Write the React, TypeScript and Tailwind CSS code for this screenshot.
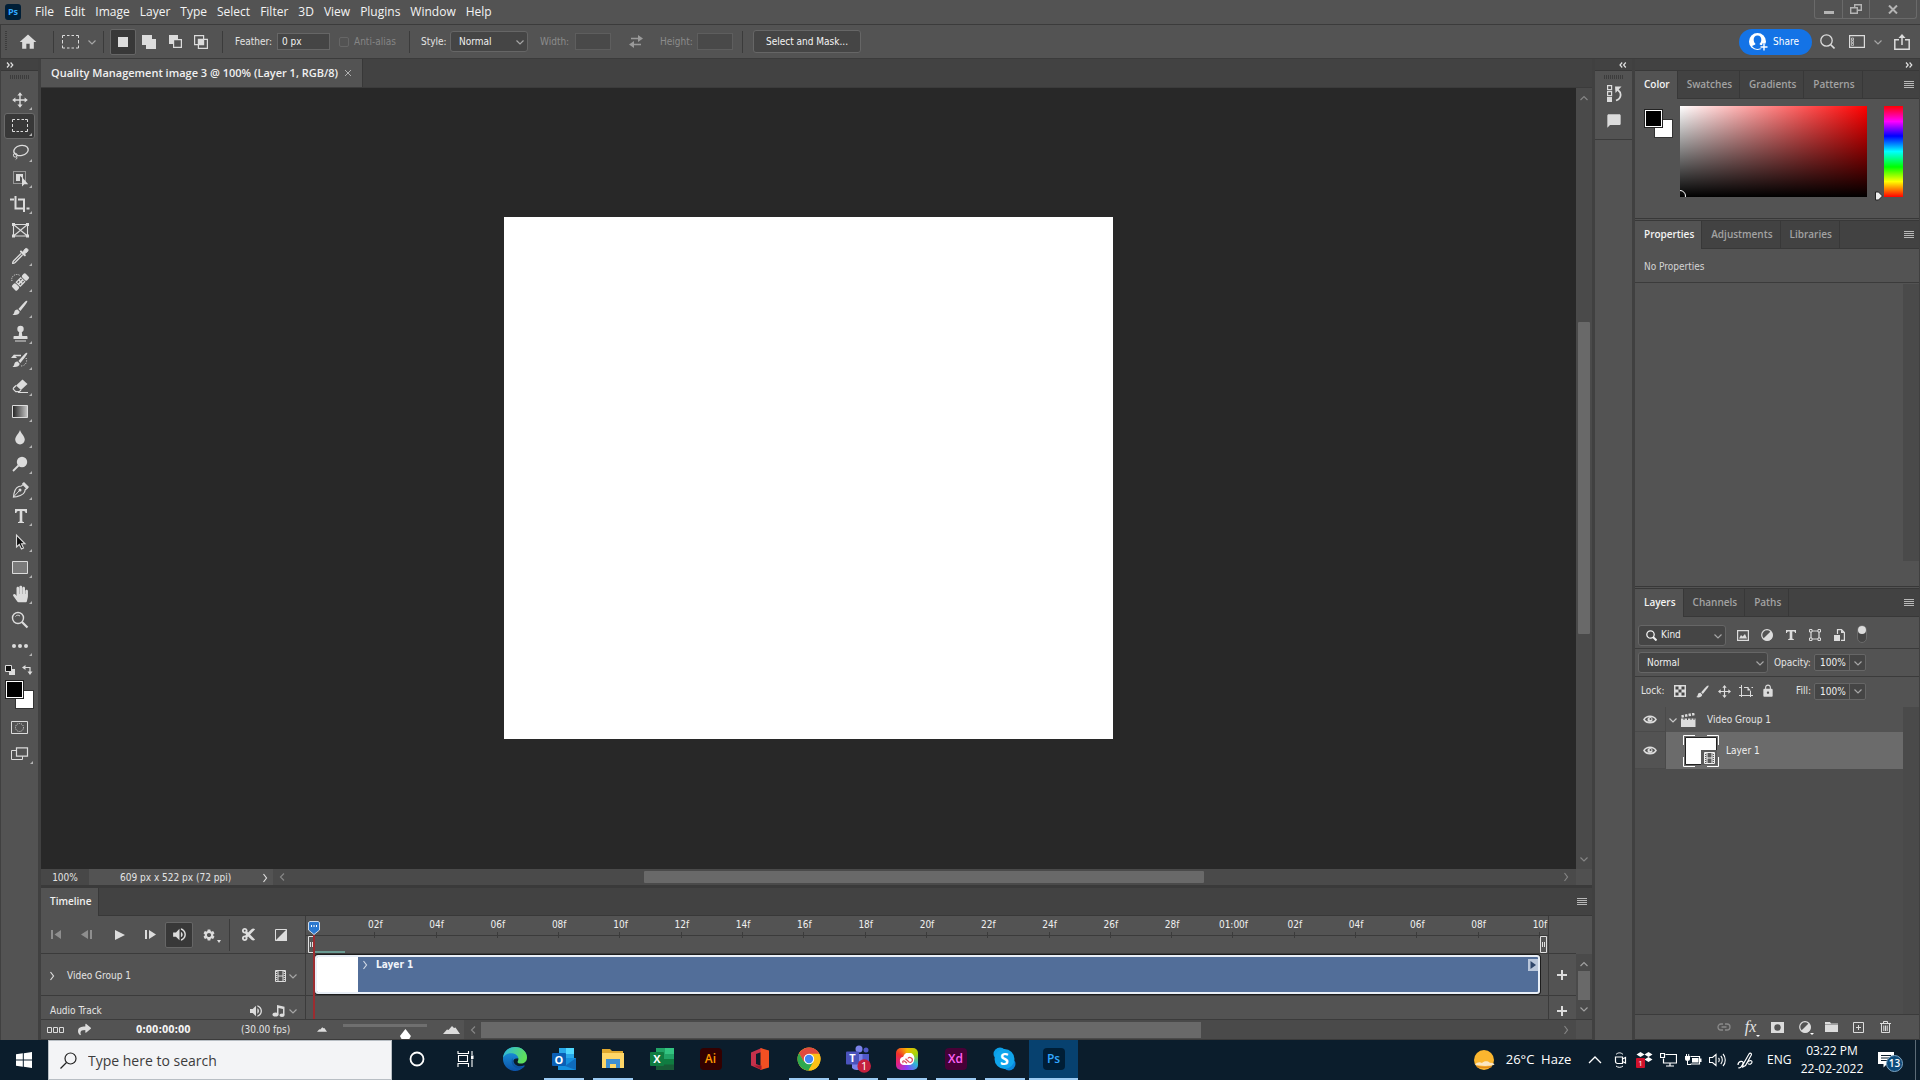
import type { ReactNode } from 'react'
import { FaHandPaper, FaShare, FaCut } from 'react-icons/fa'
import { MdHome, MdLock, MdModeComment, MdSettings, MdVolumeUp } from 'react-icons/md'

interface IconProps {
  w?: number
  h?: number
  children: ReactNode
  className?: string
}

function Icon({ w = 20, h = 20, children, className = '' }: IconProps) {
  return (
    <svg
      width={w}
      height={h}
      viewBox={`0 0 ${w} ${h}`}
      fill="none"
      stroke="none"
      aria-hidden="true"
      className={`shrink-0 ${className}`}
    >
      {children}
    </svg>
  )
}

type Direction = 'up' | 'down' | 'left' | 'right'

const chevronPaths: Record<Direction, string> = {
  up: 'M1.5 7 5 3.5 8.5 7',
  down: 'M1.5 3.5 5 7 8.5 3.5',
  left: 'M7 1.5 3.5 5 7 8.5',
  right: 'M3.5 1 6.5 5 3.5 9'
}

function Chevron({ dir, className = 'text-[#a6a6a6]' }: { dir: Direction; className?: string }) {
  return (
    <Icon w={10} h={10} className={className}>
      <path d={chevronPaths[dir]} stroke="currentColor" strokeWidth="1.2" />
    </Icon>
  )
}

function DoubleChevron({ dir }: { dir: 'left' | 'right' }) {
  return (
    <Icon w={8} h={6}>
      <path
        d={dir === 'right' ? 'M1 .5 3.2 3 1 5.5M4.6 .5 6.8 3 4.6 5.5' : 'M3.2 .5 1 3 3.2 5.5M6.8 .5 4.6 3 6.8 5.5'}
        stroke="#e0e0e0"
        strokeWidth="1.2"
      />
    </Icon>
  )
}

function PanelMenuIcon() {
  return (
    <Icon w={10} h={8}>
      <path d="M0 .5h10M0 2.5h10M0 4.5h10M0 6.5h10" stroke="#b8b8b8" strokeWidth="1" />
    </Icon>
  )
}

function Grip() {
  return (
    <Icon w={20} h={4}>
      <path d="M0 2h20" stroke="#3c3c3c" strokeWidth="4" strokeDasharray="1 1" />
    </Icon>
  )
}

function Separator() {
  return <span className="h-[22px] w-px shrink-0 bg-[#3b3b3b]" />
}

/* ---------- shared glyphs ---------- */

const light = '#dcdcdc'

const MoveGlyph = () => (
  <>
    <path d="M10 4v12M4 10h12" stroke={light} strokeWidth="1.4" />
    <path d="M10 2.2 12.6 5.4H7.4zM10 17.8 12.6 14.6H7.4zM2.2 10 5.4 7.4v5.2zM17.8 10 14.6 7.4v5.2z" fill={light} />
  </>
)

const BrushGlyph = () => (
  <>
    <path d="M17.2 2.8c-1-.6-2.6 1.2-4.6 3.4L8.4 11l2 2 4-5c1.8-2.4 3.5-4.5 2.8-5.2z" fill={light} />
    <path d="M7.6 11.6c-1.8-.2-3 .9-3.3 2.6-.2 1.1-.8 1.9-1.8 2.5 2.9 1 6.8.1 7.2-2.9z" fill={light} />
  </>
)

const FilmGlyph = ({ color = light }: { color?: string }) => (
  <>
    <path d="M.5.5h10v11H.5zM3 .5v11M8 .5v11M3 6h5" stroke={color} strokeWidth="1" />
    <path d="M1.7 1v10.5M9.3 1v10.5" stroke={color} strokeWidth="1.3" strokeDasharray="1 1" />
  </>
)

/* ---------- toolbar ---------- */

interface Tool {
  name: string
  glyph: ReactNode
  flyout?: boolean
}

const tools: Tool[] = [
  { name: 'Move', glyph: <MoveGlyph /> },
  {
    name: 'Rectangular Marquee',
    glyph: <path d="M2.5 6V3.5H5M7 3.5h2.5M11.500 3.500h2.500M15 3.500h2.500V6M17.500 8v3M17.500 13v2.500H15M13 15.500h-2.500M9 15.500H6.500M5 15.500H2.500V13M2.500 11V8" stroke={light} />
  },
  {
    name: 'Lasso',
    glyph: (
      <>
        <ellipse cx="11" cy="8.500" rx="7.300" ry="5" transform="rotate(-12 11 8.500)" stroke={light} strokeWidth="1.400" />
        <circle cx="5.300" cy="13.200" r="1.900" stroke={light} />
        <path d="M6.500 14.500c.8 1.200.3 2.400-.8 3" stroke={light} />
      </>
    )
  },
  {
    name: 'Object Selection',
    glyph: (
      <>
        <path d="M3.500 3.500h12v12h-12z" stroke={light} strokeDasharray="1 1" />
        <path d="M6 6h7v4.500L10 8v5H6z" fill={light} />
        <path d="M12 9v9.500l2.300-2.300h3.900z" fill={light} />
      </>
    )
  },
  {
    name: 'Crop',
    glyph: (
      <>
        <path d="M5.500 2v12.500H15M8 5.500h6V18" stroke={light} strokeWidth="2" />
        <path d="M0 5.500h4M16.500 14.500h3" stroke={light} strokeWidth="2" />
      </>
    )
  },
  {
    name: 'Frame',
    flyout: false,
    glyph: (
      <>
        <path d="M3.500 4.500h14v11.500h-14zM3.500 4.500l14 11.500M17.500 4.500l-14 11.500" stroke={light} strokeWidth="1.100" />
        <path d="M2 3h3v3H2zM16 3h3v3h-3zM2 14.500h3v3H2zM16 14.500h3v3h-3z" fill={light} />
      </>
    )
  },
  {
    name: 'Eyedropper',
    glyph: (
      <>
        <path d="M11 5.500 14.800 9.300" stroke={light} strokeWidth="2" strokeLinecap="round" />
        <path d="M12 7.500 14.800 3.200c.8-1 2.200-1 2.800-.2.700.8.6 2-.2 2.700L13.500 8.500z" fill={light} stroke={light} />
        <path d="M11 7.500 3.500 15c-.6.700-.9 1.500-.8 2.300.9.100 1.700-.2 2.400-.8L12.500 9" stroke={light} strokeWidth="1.300" />
      </>
    )
  },
  {
    name: 'Spot Healing Brush',
    glyph: (
      <>
        <path d="M9.500 3.200C5 .8.500 5 2 9" stroke={light} strokeDasharray="1 1.200" />
        <g transform="rotate(-45 10.500 10)">
          <rect x="1" y="6.500" width="5" height="7" rx="1.500" fill={light} />
          <rect x="15" y="6.500" width="5" height="7" rx="1.500" fill={light} />
          <rect x="6.800" y="6.500" width="7.400" height="7" fill={light} />
          <path d="M8 8.500h2M11.500 8.500h2M8 11.500h2M11.500 11.500h2" stroke="#535353" strokeWidth="1.200" />
        </g>
      </>
    )
  },
  { name: 'Brush', glyph: <BrushGlyph /> },
  {
    name: 'Clone Stamp',
    glyph: (
      <>
        <circle cx="10.500" cy="5" r="3.200" fill={light} />
        <path d="M9.300 7h2.400l.6 5h4.200c.5 0 1 .4 1 .9V15H3.500v-2.100c0-.5.5-.9 1-.9h4.200zM5 16.500h11v1H5z" fill={light} />
      </>
    )
  },
  {
    name: 'History Brush',
    glyph: (
      <>
        <BrushGlyph />
        <path d="M1 8 4 4.500 7 8z" fill={light} />
        <path d="M4 5.500h7" stroke={light} strokeWidth="1.500" />
        <path d="M16 8c2 4-1 8-5 8" stroke={light} strokeDasharray="1 1.500" />
      </>
    )
  },
  {
    name: 'Eraser',
    glyph: (
      <>
        <path d="M12.500 3.500 17.500 8 11 14 6 9.500z" fill={light} />
        <path d="M6 9.500 3.500 12c-.4.5-.4 1 0 1.400l2.200 2.200h3.500L11 14" stroke={light} strokeWidth="1.200" />
        <path d="M8 16.500h10" stroke={light} />
      </>
    )
  },
  {
    name: 'Gradient',
    glyph: (
      <>
        <defs>
          <linearGradient id="tool-gradient">
            <stop offset="0" stopColor="#222" />
            <stop offset="1" stopColor="#c8c8c8" />
          </linearGradient>
        </defs>
        <path d="M2.500 3.500h15v12h-15z" fill="url(#tool-gradient)" stroke={light} />
      </>
    )
  },
  { name: 'Blur', glyph: <path d="M10 2c1 3.500 4.800 6.300 4.800 9.600a4.800 4.800 0 0 1-9.600 0C5.200 8.300 9 5.500 10 2z" fill={light} /> },
  {
    name: 'Dodge',
    glyph: (
      <>
        <circle cx="12" cy="8" r="5.200" fill={light} />
        <path d="M8.500 11.500 3 17" stroke={light} strokeWidth="1.800" />
      </>
    )
  },
  {
    name: 'Pen',
    glyph: (
      <>
        <path d="m13 4.500 4 4-1.800 1.200c-.2 3.800-3.200 5.800-8.400 6.900L3.500 17l.5-3.500C5 8.500 7.500 6 11.500 6z" stroke={light} strokeWidth="1.200" />
        <path d="m3.500 17 5.500-6" stroke={light} />
        <circle cx="10" cy="10" r="1.500" fill={light} />
        <path d="m12 3.500 2-1.500 5 5-1.500 1.800z" fill={light} />
      </>
    )
  },
  { name: 'Horizontal Type', glyph: <path d="M5 3h12v4h-1.500c0-1.300-.5-2-2-2h-1.200v9.700c0 .9.500 1.300 1.700 1.300v1H8v-1c1.200 0 1.700-.4 1.700-1.300V5H8.500c-1.500 0-2 .7-2 2H5z" fill={light} /> },
  { name: 'Path Selection', glyph: <path d="M6.500 3v12l2.800-2.500L11.500 17l2-.9-2-4.300h3.500z" fill="#111" stroke={light} strokeWidth="1.100" /> },
  { name: 'Rectangle', glyph: <path d="M2.500 3.500h15v12h-15z" fill="#7a7a7a" stroke={light} /> },
  { name: 'Hand', glyph: <FaHandPaper x="2" y="1.500" size={17} color={light} /> },
  {
    name: 'Zoom',
    flyout: false,
    glyph: (
      <>
        <circle cx="8" cy="8" r="5.500" stroke={light} strokeWidth="1.400" />
        <path d="M5.500 6.500C6.500 5 8.500 4.800 10 6" stroke={light} />
        <path d="m12 12 5.500 5.500" stroke={light} strokeWidth="2.200" />
      </>
    )
  },
  {
    name: 'Edit Toolbar',
    glyph: (
      <>
        <circle cx="4" cy="10" r="2" fill={light} />
        <circle cx="10" cy="10" r="2" fill={light} />
        <circle cx="16" cy="10" r="2" fill={light} />
      </>
    )
  }
]

function Toolbar() {
  return (
    <aside className="flex w-[41px] shrink-0 flex-col border-l border-r-[3px] border-[#404040] bg-[#535353]">
      <div className="flex h-3 items-center border-b border-[#383838] bg-[#424242] pl-[5px]">
        <DoubleChevron dir="right" />
      </div>
      <div className="flex h-4 items-start justify-center pt-1">
        <Grip />
      </div>
      {tools.map((tool) => (
        <button
          key={tool.name}
          type="button"
          aria-label={tool.name}
          className={`relative mx-[3px] flex h-[26px] items-center justify-center rounded-[3px] border ${
            tool.name === 'Rectangular Marquee' ? 'border-[#6a6a6a] bg-[#383838]' : 'border-transparent'
          }`}
        >
          <Icon>{tool.glyph}</Icon>
          {tool.flyout !== false && (
            <span className="absolute right-[2px] bottom-[2px] border-b-[3px] border-l-[3px] border-b-[#b4b4b4] border-l-transparent" />
          )}
        </button>
      ))}
      <div className="mt-[6px] flex h-[15px] items-start justify-between pr-[5px] pl-1">
        <button type="button" aria-label="Default colors">
          <Icon w={10} h={10}>
            <path d="M4 4h6v6H4z" fill={light} />
            <path d="M.5.5h6v6h-6z" fill="#111" stroke={light} />
          </Icon>
        </button>
        <button type="button" aria-label="Switch colors">
          <Icon w={11} h={10}>
            <path d="M2 2.500h6V8" stroke={light} strokeWidth="1.200" />
            <path d="M3.500 0v5L0 2.500zM5.500 6.500h5L8 10z" fill={light} />
          </Icon>
        </button>
      </div>
      <div className="flex h-[35px] pl-1">
        <ColorPair />
      </div>
      <button type="button" aria-label="Quick mask" className="flex h-[26px] items-center justify-center">
        <Icon w={18} h={14}>
          <path d="M.5.500h16v12H.5z" stroke={light} />
          <circle cx="8.500" cy="6.500" r="4" stroke={light} strokeDasharray="1 1" />
        </Icon>
      </button>
      <button type="button" aria-label="Screen mode" className="relative flex h-[26px] items-center justify-center">
        <Icon w={18} h={14}>
          <path d="M.5 3.500h11v9H.5z" stroke={light} />
          <path d="M5.500.800h11v8.400h-11z" fill="#535353" stroke={light} strokeWidth="1.200" />
        </Icon>
        <span className="absolute right-[5px] bottom-[3px] border-b-[3px] border-l-[3px] border-b-[#b4b4b4] border-l-transparent" />
      </button>
    </aside>
  )
}

/* Foreground swatch laid over the background swatch */
function ColorPair() {
  return (
    <div className="relative size-[29px]">
      <button type="button" aria-label="Background color" className="absolute right-0 bottom-0 size-[19px] border border-[#333] bg-white" />
      <button type="button" aria-label="Foreground color" className="absolute top-0 left-0 size-[19px] border border-[#222] bg-white p-px">
        <span className="block size-full bg-black" />
      </button>
    </div>
  )
}

/* ---------- top bars ---------- */

const menus = ['File', 'Edit', 'Image', 'Layer', 'Type', 'Select', 'Filter', '3D', 'View', 'Plugins', 'Window', 'Help']

function MenuBar() {
  return (
    <header className="flex h-[25px] items-center border-b border-[#3b3b3b] pr-[3px] pl-[5px]">
      <span className="mr-2 flex size-4 items-center justify-center rounded-[3px] bg-[#001e36] text-[9px] font-bold text-[#31a8ff]">Ps</span>
      <nav className="flex pl-[1px]">
        {menus.map((menu) => (
          <button key={menu} type="button" className="px-[5px] text-[12px] leading-4 text-[#f4f4f4]">
            {menu}
          </button>
        ))}
      </nav>
      <div className="ml-auto flex h-[19px] self-start rounded-b-[3px] border border-t-0 border-[#6a6a6a]">
        <button type="button" aria-label="Minimize" className="flex w-7 items-center justify-center border-r border-[#6a6a6a]">
          <Icon w={10} h={10}>
            <path d="M0 7h10v3H0z" fill="#b4b4b4" />
          </Icon>
        </button>
        <button type="button" aria-label="Restore" className="flex w-[27px] items-center justify-center border-r border-[#6a6a6a]">
          <Icon w={12} h={10}>
            <path d="M4.700.700h6.600v5.600H4.700z" stroke="#b4b4b4" strokeWidth="1.400" />
            <path d="M.700 3.700h6.600v5.600H.7z" fill="#535353" stroke="#b4b4b4" strokeWidth="1.400" />
          </Icon>
        </button>
        <button type="button" aria-label="Close" className="flex w-[46px] items-center justify-center">
          <Icon w={10} h={9}>
            <path d="m1 .5 8 8M9 .5l-8 8" stroke="#b4b4b4" strokeWidth="2" />
          </Icon>
        </button>
      </div>
    </header>
  )
}

interface SelectBoxProps {
  label: string
  value: string
  className: string
  icon?: ReactNode
}

function SelectBox({ label, value, className, icon }: SelectBoxProps) {
  return (
    <span className={`relative flex h-[21px] shrink-0 items-center rounded-[3px] border border-[#666] bg-[#454545] ${className}`}>
      {icon}
      <select aria-label={label} className="h-full min-w-0 flex-1 appearance-none bg-transparent pl-2 text-[#f0f0f0] outline-none">
        <option>{value}</option>
      </select>
      <span className="pointer-events-none absolute top-[5px] right-[2px]">
        <Chevron dir="down" />
      </span>
    </span>
  )
}

function OptionsBar() {
  return (
    <div className="flex h-[34px] items-center border-b border-l border-[#3b3b3b] pr-[10px] text-[#e4e4e4]">
      <Icon w={5} h={22} className="ml-1">
        <path d="M1 0v20" stroke="#3c3c3c" strokeWidth="2" strokeDasharray="1 1" />
      </Icon>
      <button type="button" aria-label="Home" className="ml-2 flex w-5 justify-center">
        <MdHome size={20} color={light} />
      </button>
      <span className="w-[15px]" />
      <Separator />
      <button type="button" aria-label="Tool preset" className="flex w-[49px] items-center gap-2 pl-2">
        <Icon w={17} h={14}>
          <path d="M.5 3V.5H3M5 .5h2.500M9.500 .5H12M14 .5h2.500V3M16.500 5v3.500M16.500 10.500v2.500H14M12 13H9.500M7.500 13H5M3 13H.5v-2.500M.5 8.500V5" stroke={light} />
        </Icon>
        <Chevron dir="down" />
      </button>
      <Separator />
      <div className="flex pl-[6px]">
        <button type="button" aria-label="New selection" className="flex h-[26px] w-[26px] items-center justify-center rounded-[2px] border border-[#666] bg-[#383838]">
          <Icon w={10} h={10}>
            <path d="M0 0h10v10H0z" fill={light} />
          </Icon>
        </button>
        <button type="button" aria-label="Add to selection" className="flex w-[26px] items-center justify-center">
          <Icon w={14} h={14}>
            <path d="M0 0h10v4h4v10H4v-4H0z" fill={light} />
          </Icon>
        </button>
        <button type="button" aria-label="Subtract from selection" className="flex w-[26px] items-center justify-center">
          <Icon w={13} h={13}>
            <path d="M0 0h9v9H0z" fill={light} />
            <path d="M4.600 4.600h7.800v7.800H4.600z" fill="#535353" stroke={light} strokeWidth="1.200" />
          </Icon>
        </button>
        <button type="button" aria-label="Intersect with selection" className="flex w-[26px] items-center justify-center">
          <Icon w={14} h={14}>
            <path d="M.600.600h9v9h-9zM4.400 4.400h9v9h-9z" stroke={light} strokeWidth="1.200" />
            <path d="M4.400 4.400h5.200v5.200H4.400z" fill={light} />
          </Icon>
        </button>
      </div>
      <span className="w-2" />
      <Separator />
      <label htmlFor="feather" className="w-[54px] shrink-0 pl-3 whitespace-nowrap">Feather:</label>
      <input id="feather" defaultValue="0 px" className="h-[17px] w-[53px] border border-[#666] bg-[#454545] pl-1 text-[#f0f0f0] outline-none" />
      <label className="ml-[9px] flex w-[70px] items-center gap-[5px] whitespace-nowrap text-[#858585]">
        <input type="checkbox" disabled className="size-[10px] appearance-none rounded-[2px] border border-[#666]" />
        Anti-alias
      </label>
      <Separator />
      <span className="w-[40px] shrink-0 pl-[11px]">Style:</span>
      <SelectBox label="Style" value="Normal" className="w-[78px]" />
      <label htmlFor="sel-width" className="ml-[12px] w-[35px] shrink-0 text-[#8c8c8c]">Width:</label>
      <input id="sel-width" disabled className="h-[17px] w-9 border border-[#5e5e5e] bg-[#494949]" />
      <button type="button" aria-label="Swap width and height" className="flex w-[49px] justify-center">
        <Icon w={14} h={13}>
          <path d="M2 3.500h8M4 9.500h8" stroke="#9a9a9a" strokeWidth="1.600" />
          <path d="M9 0v7l5-3.500zM5 6v7L0 9.500z" fill="#9a9a9a" />
        </Icon>
      </button>
      <label htmlFor="sel-height" className="w-[37px] shrink-0 text-[#8c8c8c]">Height:</label>
      <input id="sel-height" disabled className="mr-[9px] h-[17px] w-9 border border-[#5e5e5e] bg-[#494949]" />
      <Separator />
      <button type="button" className="ml-[10px] h-[23px] w-[108px] shrink-0 rounded-[3px] border border-[#666] bg-[#454545] whitespace-nowrap text-[#f4f4f4]">
        Select and Mask...
      </button>
      <button type="button" className="ml-auto flex h-[26px] w-[73px] items-center gap-[5px] rounded-full bg-[#1473e6] pl-[10px] text-white">
        <Icon w={19} h={18}>
          <circle cx="8.500" cy="8.500" r="8.500" fill="#fff" />
          <path d="M8.500 2.500c2.600 0 3.800 1.800 3.800 4.200 0 1.700-.7 3-1.600 3.900v.9l3.300 1.500C12.500 15 10.600 16 8.500 16S4.500 15 3 13l3.300-1.500v-.9C5.400 9.700 4.700 8.400 4.700 6.700c0-2.400 1.200-4.200 3.800-4.200z" fill="#1473e6" />
          <path d="M15 10.500v7M11.500 14h7" stroke="#1473e6" strokeWidth="3.500" />
          <path d="M15 10.500v7M11.500 14h7" stroke="#fff" strokeWidth="1.400" />
        </Icon>
        Share
      </button>
      <button type="button" aria-label="Search" className="ml-2">
        <Icon w={15} h={15}>
          <circle cx="6.500" cy="6.500" r="5.700" stroke={light} strokeWidth="1.300" />
          <path d="m10.500 10.500 4 4" stroke={light} strokeWidth="1.600" />
        </Icon>
      </button>
      <button type="button" aria-label="Choose workspace" className="ml-[14px] flex items-center gap-2">
        <Icon w={16} h={13}>
          <path d="M.600.600h14.800v11.800H.6z" stroke={light} strokeWidth="1.200" />
          <path d="M2.500 3h2v2h-2zM2.500 5.700h2v2h-2zM2.500 8.400h2v2h-2z" stroke={light} strokeWidth=".7" />
        </Icon>
        <Chevron dir="down" />
      </button>
      <button type="button" aria-label="Share file" className="ml-[11px]">
        <Icon w={16} h={16}>
          <path d="M5 5.800H.800v9.400h14.400V5.800H11M8 11V2" stroke={light} strokeWidth="1.500" />
          <path d="M4.500 4 8 0l3.500 4z" fill={light} />
        </Icon>
      </button>
    </div>
  )
}

/* ---------- document ---------- */

function DocumentArea() {
  return (
    <section className="flex flex-1 flex-col">
      <div className="flex h-[29px] border-b border-[#3b3b3b] bg-[#424242]">
        <div className="flex w-[322px] items-center border-r border-[#383838] bg-[#535353] pl-[10px] font-['Open_Sans','Noto_Sans',sans-serif] text-[11px] leading-4 font-semibold whitespace-nowrap text-[#f0f0f0]">
          <span className="w-[291px]">Quality Management image 3 @ 100% (Layer 1, RGB/8)</span>
          <button type="button" aria-label="Close document">
            <Icon w={12} h={8}>
              <path d="m3 1 6 6M9 1 3 7" stroke="#b0b0b0" />
            </Icon>
          </button>
        </div>
      </div>
      <div className="flex flex-1">
        <div className="flex flex-1 items-center justify-center bg-[#282828] pb-[2px]">
          <div className="h-[522px] w-[609px] bg-white" />
        </div>
        <div className="flex w-4 flex-col items-center bg-[#4a4a4a] py-[5px]">
          <Chevron dir="up" className="text-[#858585]" />
          <span className="grow-[218]" />
          <span className="w-3 grow-[310] rounded-[1px] bg-[#696969]" />
          <span className="grow-[219]" />
          <Chevron dir="down" className="text-[#858585]" />
        </div>
      </div>
      <div className="flex h-4 bg-[#4a4a4a] text-[#e4e4e4]">
        <span className="flex w-12 items-center justify-center bg-[#474747] pt-[2px]">100%</span>
        <div className="flex w-[184px] items-center justify-between bg-[#535353] pt-[2px] pr-[3px] pl-[31px] whitespace-nowrap">
          609 px x 522 px (72 ppi)
          <Chevron dir="right" className="text-[#dcdcdc]" />
        </div>
        <div className="flex flex-1 items-center pr-[5px] pl-1">
          <Chevron dir="left" className="text-[#858585]" />
          <span className="grow-[356]" />
          <span className="h-3 grow-[560] rounded-[1px] bg-[#696969]" />
          <span className="grow-[356]" />
          <Chevron dir="right" className="text-[#858585]" />
        </div>
        <span className="w-4 bg-[#505050]" />
      </div>
    </section>
  )
}

/* ---------- timeline ---------- */

const frames = [
  '02f', '04f', '06f', '08f', '10f', '12f', '14f', '16f', '18f', '20f',
  '22f', '24f', '26f', '28f', '01:00f', '02f', '04f', '06f', '08f', '10f'
]

function WorkAreaHandle() {
  return (
    <Icon w={7} h={17}>
      <path d="M.5.5h6v16h-6z" fill="#555" stroke="#e0e0e0" />
      <path d="M2.500 6v5M4.500 6v5" stroke="#e0e0e0" />
    </Icon>
  )
}

function Mountains({ w, h }: { w: number; h: number }) {
  return (
    <svg width={w} height={h} viewBox="0 0 17 8" aria-hidden="true">
      <path d="M0 8 4 3.500 5.500 4 9 0l2 2 1.500-.5L17 8z" fill={light} />
    </svg>
  )
}

function Timeline() {
  return (
    <section className="border-t-[3px] border-[#3a3a3a] bg-[#535353]">
      <div className="flex h-7 items-center justify-between border-b border-[#383838] bg-[#424242] pr-[5px]">
        <h2 className="flex h-7 w-[58px] items-center border-r border-[#383838] bg-[#535353] pb-[2px] pl-[9px] font-['Open_Sans','Noto_Sans',sans-serif] font-semibold text-[#f0f0f0]">Timeline</h2>
        <button type="button" aria-label="Timeline menu">
          <PanelMenuIcon />
        </button>
      </div>
      <div className="flex h-[103px]">
        <div className="w-[265px] shrink-0 border-r border-[#3b3b3b]">
          <div className="flex h-[38px] items-center border-b border-[#3b3b3b]">
            <button type="button" aria-label="Go to first frame" className="flex w-[31px] justify-center">
              <Icon w={11} h={9}>
                <path d="M0 0h2v9H0zM10 0v9L3.500 4.500z" fill="#8e8e8e" />
              </Icon>
            </button>
            <button type="button" aria-label="Previous frame" className="flex w-[29px] justify-center">
              <Icon w={11} h={9}>
                <path d="M7 0v9L0 4.500zM9 0h2v9H9z" fill="#8e8e8e" />
              </Icon>
            </button>
            <button type="button" aria-label="Play" className="flex w-[37px] justify-center">
              <Icon w={10} h={10}>
                <path d="M0 0v10l10-5z" fill={light} />
              </Icon>
            </button>
            <button type="button" aria-label="Next frame" className="mr-[2px] flex w-[25px] justify-center">
              <Icon w={11} h={9}>
                <path d="M0 0h2v9H0zM4 0v9l7-4.500z" fill={light} />
              </Icon>
            </button>
            <button type="button" aria-label="Mute audio" className="flex h-[26px] w-7 items-center justify-center rounded-[2px] border border-[#666] bg-[#383838]">
              <MdVolumeUp size={17} color={light} />
            </button>
            <button type="button" aria-label="Playback options" className="relative flex w-8 justify-center">
              <MdSettings size={14} color={light} />
              <span className="absolute right-1 -bottom-[1px] border-x-2 border-t-[3px] border-x-transparent border-t-[#dcdcdc]" />
            </button>
            <span className="ml-1 h-8 w-px bg-[#3b3b3b]" />
            <button type="button" aria-label="Split at playhead" className="flex w-9 justify-center">
              <FaCut size={15} color={light} />
            </button>
            <button type="button" aria-label="Transitions" className="flex w-[30px] justify-center">
              <Icon w={12} h={12}>
                <path d="M.5.5h11v11H.5z" stroke={light} />
                <path d="M12 0v12H0z" fill={light} />
              </Icon>
            </button>
          </div>
          <div className="flex h-[42px] items-center border-b border-[#3b3b3b] pt-[2px] pr-[7px] pl-[6px] text-[#e4e4e4]">
            <Chevron dir="right" className="text-[#dcdcdc]" />
            <span className="ml-[10px] flex-1">Video Group 1</span>
            <Icon w={11} h={12}>
              <FilmGlyph />
            </Icon>
            <Chevron dir="down" className="ml-[2px] text-[#a6a6a6]" />
          </div>
          <div className="flex h-[23px] items-center pt-[6px] pr-[7px] pl-[9px] text-[#e4e4e4]">
            <span className="flex-1">Audio Track</span>
            <MdVolumeUp size={16} color={light} className="mr-2" />
            <Icon w={14} h={12}>
              <path d="M5 0 12.500 1.800V10h-1.500V4L6.500 3v6.500H5z" fill={light} />
              <ellipse cx="3.500" cy="9.500" rx="3" ry="2" fill={light} />
              <ellipse cx="10" cy="10.200" rx="2.600" ry="1.800" fill={light} />
            </Icon>
            <Chevron dir="down" className="ml-[2px] text-[#a6a6a6]" />
          </div>
        </div>

        <div className="relative min-w-0 flex-1 border-r border-[#3b3b3b]">
          <div className="flex h-5 border-b border-[#3b3b3b] pr-2 pl-2">
            {frames.map((frame, i) => (
              <div key={i} className="flex flex-1 flex-col items-end">
                <span className="flex h-4 w-0 justify-center pt-[2px] leading-[14px] whitespace-nowrap text-[#f0f0f0]">{frame}</span>
                <span className="h-[6px] w-px shrink-0 bg-[#3b3b3b]" />
              </div>
            ))}
          </div>
          <div className="flex h-[18px] items-start justify-between border-b border-[#3b3b3b] pr-[1px] pl-[2px]">
            <WorkAreaHandle />
            <span className="h-[2px] w-[30px] flex-none self-end bg-[#6a9a92]" />
            <span className="flex-1" />
            <WorkAreaHandle />
          </div>
          <div className="h-[42px] border-b border-[#3b3b3b] pt-[1px] pr-2 pl-[9px]">
            <div className="flex h-[39px] overflow-hidden rounded-[3px] border-2 border-[#e8eef6] bg-[#526e99] ring-1 ring-[#1c1c1c]">
              <span className="w-[41px] bg-white" />
              <div className="flex h-4 flex-1 items-center gap-[6px] pl-[2px] text-[#f0f4fa]">
                <Chevron dir="right" className="text-[#d0d8e4]" />
                <span className="flex-1 font-bold">Layer 1</span>
                <Icon w={10} h={12}>
                  <path d="M0 0h10v12H0z" fill="#b9c6da" />
                  <path d="M2.500 2v8L8 6z" fill="#2f466b" />
                </Icon>
              </div>
            </div>
          </div>
          {/* playhead */}
          <div className="absolute top-[5px] left-[2px] flex h-[98px] w-3 flex-col items-center">
            <Icon w={12} h={14}>
              <path d="M.500 1.500 2 .5h8l1.500 1v7.500L6 13.500.5 9z" fill="#2a78cf" stroke="#dfe9f5" strokeWidth=".9" />
              <path d="M3.500 4v2M6 4v2M8.500 4v2" stroke="#fff" />
            </Icon>
            <span className="w-[2px] flex-1 bg-[#9c2c30]" />
          </div>
        </div>

        <div className="w-[27px]">
          <div className="h-[38px] border-b border-[#3b3b3b]" />
          <button type="button" aria-label="Add media" className="flex h-[42px] w-full items-center justify-center border-b border-[#3b3b3b] pr-[2px]">
            <Icon w={10} h={10}>
              <path d="M5 0v10M0 5h10" stroke={light} strokeWidth="2" />
            </Icon>
          </button>
          <button type="button" aria-label="Add audio" className="flex h-[23px] w-full items-center justify-center pt-[6px] pr-[2px]">
            <Icon w={10} h={10}>
              <path d="M5 0v10M0 5h10" stroke={light} strokeWidth="2" />
            </Icon>
          </button>
        </div>
        <div className="mt-[38px] flex w-4 flex-col items-center bg-[#4a4a4a] py-[5px]">
          <Chevron dir="up" className="text-[#a0a0a0]" />
          <span className="mt-[2px] mb-1 w-3 flex-1 bg-[#696969]" />
          <Chevron dir="down" className="text-[#a0a0a0]" />
        </div>
      </div>

      <div className="flex h-[21px] items-center border-y border-[#3b3b3b] text-[#e4e4e4]">
        <button type="button" aria-label="Convert to frame animation" className="ml-[6px]">
          <Icon w={17} h={6}>
            <path d="M.5.5h4v5h-4zM6.500.5h4v5h-4zM12.500.5h4v5h-4z" stroke={light} />
          </Icon>
        </button>
        <button type="button" aria-label="Render video" className="ml-[14px]">
          <FaShare size={13} color={light} />
        </button>
        <span className="w-[146px] pl-[45px] font-bold text-[#f4f4f4]">0:00:00:00</span>
        <span className="w-[80px] pl-[4px]">(30.00 fps)</span>
        <Mountains w={10} h={5} />
        <div className="relative mx-4 h-[19px] w-[84px]">
          <span className="absolute inset-x-0 top-1 h-[3px] bg-[#6f6f6f]" />
          <input
            type="range"
            aria-label="Timeline zoom"
            defaultValue={78}
            className="absolute inset-x-0 top-[9px] h-[10px] w-full appearance-none bg-transparent [&::-webkit-slider-thumb]:h-[10px] [&::-webkit-slider-thumb]:w-[11px] [&::-webkit-slider-thumb]:appearance-none [&::-webkit-slider-thumb]:bg-white [&::-webkit-slider-thumb]:[clip-path:polygon(50%_0,100%_70%,85%_100%,15%_100%,0_70%)]"
          />
        </div>
        <Mountains w={17} h={8} />
        <div className="ml-1 flex h-full flex-1 items-center bg-[#4a4a4a] pr-[5px] pl-1">
          <Chevron dir="left" className="text-[#858585]" />
          <span className="ml-[3px] h-4 grow-[719] bg-[#696969]" />
          <span className="grow-[360]" />
          <Chevron dir="right" className="text-[#858585]" />
        </div>
        <span className="h-full w-4 bg-[#505050]" />
      </div>
    </section>
  )
}

/* ---------- right panels ---------- */

function PanelTabs({ tabs }: { tabs: string[] }) {
  return (
    <div className="flex h-7 shrink-0 bg-[#424242] font-['Open_Sans','Noto_Sans',sans-serif] font-semibold">
      {tabs.map((tab, i) => (
        <button
          key={tab}
          type="button"
          className={`border-r border-[#383838] pr-[7px] pb-[2px] pl-[9px] ${i === 0 ? 'bg-[#535353] text-[#f4f4f4]' : 'border-b text-[#a3a3a3]'}`}
        >
          {tab}
        </button>
      ))}
      <div className="flex flex-1 items-center justify-end border-b border-[#383838] pr-[5px]">
        <button type="button" aria-label={`${tabs[0]} panel menu`}>
          <PanelMenuIcon />
        </button>
      </div>
    </div>
  )
}

function ColorPanel() {
  return (
    <section className="h-[148px] border-b border-[#383838]">
      <PanelTabs tabs={['Color', 'Swatches', 'Gradients', 'Patterns']} />
      <div className="flex items-start pt-[7px] pl-[9px]">
        <div className="mt-[3px] mr-[7px]">
          <ColorPair />
        </div>
        <div className="relative h-[91px] flex-1 overflow-hidden bg-[linear-gradient(to_top,#000,transparent),linear-gradient(to_right,#fff,#f00)]">
          <span className="absolute -bottom-[5px] -left-[6px] size-3 rounded-full border border-white" />
        </div>
        <span className="relative ml-[17px] h-[91px] w-[19px] bg-[linear-gradient(to_bottom,#f00,#f0f_17%,#00f_33%,#0ff_50%,#0f0_67%,#ff0_83%,#f00)]">
          <Icon w={9} h={10} className="absolute -bottom-1 -left-[10px]">
            <path d="M1.500 1h3L8.500 5l-4 4h-3z" fill="#eee" stroke="#222" />
          </Icon>
        </span>
        <span className="w-4" />
      </div>
    </section>
  )
}

function PropertiesPanel() {
  return (
    <section className="mt-[1px] flex h-[367px] flex-col border-y border-[#383838]">
      <PanelTabs tabs={['Properties', 'Adjustments', 'Libraries']} />
      <p className="flex h-[34px] shrink-0 items-center border-b border-[#3b3b3b] pt-[3px] pl-[9px] text-[#d4d4d4]">No Properties</p>
      <div className="mt-[1px] h-[277px] w-4 self-end bg-[#4a4a4a]" />
    </section>
  )
}

const HalfCircle = () => (
  <Icon w={12} h={12}>
    <circle cx="6" cy="6" r="5.300" stroke={light} strokeWidth="1.200" />
    <path d="M9.800 2.200a5.400 5.400 0 1 1-7.600 7.600z" fill={light} />
  </Icon>
)

function Eye({ name }: { name: string }) {
  return (
    <button type="button" aria-label={`Toggle ${name} visibility`} className="flex w-[31px] shrink-0 items-center justify-center self-stretch border-r border-b border-[#4a4a4a] bg-[#535353]">
      <Icon w={14} h={9}>
        <path d="M1 4.500C3.500.3 10.500.3 13 4.500 10.500 8.700 3.500 8.700 1 4.500z" stroke={light} strokeWidth="1.500" />
        <circle cx="7" cy="4.500" r="2.500" fill={light} />
        <circle cx="7.500" cy="4" r="1" fill="#535353" />
      </Icon>
    </button>
  )
}

function PercentField({ id }: { id: string }) {
  return (
    <span className="flex h-[17px] w-[52px] items-center rounded-[2px] border border-[#666] bg-[#454545]">
      <input id={id} defaultValue="100%" className="h-full w-[35px] border-r border-[#666] pl-[5px] text-[#f0f0f0] outline-none" />
      <button type="button" aria-label={`${id} slider`} className="pl-[3px]">
        <Chevron dir="down" />
      </button>
    </span>
  )
}

const filters: { name: string; icon: ReactNode }[] = [
  {
    name: 'Pixel layers',
    icon: (
      <Icon w={12} h={11}>
        <path d="M.600.600h10.800v9.800H.6z" stroke={light} strokeWidth="1.200" />
        <path d="M2 8.500 4 5l1.500 1.500L8 4l2 4.500z" fill={light} />
      </Icon>
    )
  },
  { name: 'Adjustment layers', icon: <HalfCircle /> },
  {
    name: 'Type layers',
    icon: (
      <Icon w={12} h={10}>
        <path d="M1 0h10v3h-1c0-1-.5-1.500-1.500-1.500H7.300V8c0 .7.500 1 1.500 1v1H3.200V9c1 0 1.500-.3 1.500-1V1.500H3.500C2.500 1.500 2 2 2 3H1z" fill={light} />
      </Icon>
    )
  },
  {
    name: 'Shape layers',
    icon: (
      <Icon w={12} h={12}>
        <path d="M2 2h8v8H2z" stroke={light} strokeWidth="1.200" />
        <path d="M.5.5H3V3H.5zM9 .5h2.500V3H9zM.5 9H3v2.500H.5zM9 9h2.500v2.500H9z" fill="#535353" stroke={light} />
      </Icon>
    )
  },
  {
    name: 'Smart objects',
    icon: (
      <Icon w={11} h={12}>
        <path d="M3.500 5V.600h4L10.400 3.500v7.900H7" stroke={light} strokeWidth="1.200" />
        <path d="M0 6h6v6H0zM7 .5V4h3.500z" fill={light} />
      </Icon>
    )
  }
]

const locks: { name: string; icon: ReactNode }[] = [
  {
    name: 'Lock transparent pixels',
    icon: (
      <Icon w={12} h={12}>
        <path d="M0 0h12v12H0z" fill={light} />
        <path d="M1.500 1.500h3v3h-3zM7.500 1.500h3v3h-3zM4.500 4.500h3v3h-3zM1.500 7.500h3v3h-3zM7.500 7.500h3v3h-3z" fill="#444" />
      </Icon>
    )
  },
  {
    name: 'Lock image pixels',
    icon: (
      <svg width="15" height="15" viewBox="1 1 18 18" fill="none" aria-hidden="true">
        <BrushGlyph />
      </svg>
    )
  },
  {
    name: 'Lock position',
    icon: (
      <svg width="15" height="15" viewBox="1 1 18 18" fill="none" aria-hidden="true">
        <MoveGlyph />
      </svg>
    )
  },
  {
    name: 'Prevent auto-nesting',
    icon: (
      <Icon w={14} h={12}>
        <path d="M2.500 0v12M0 2.500h3M5 2.500h4.500M0 10.500h14M11.500 6v6M12.500 2.500H14" stroke={light} />
        <path d="M8.500 2v3.500H12z" fill={light} />
      </Icon>
    )
  },
  { name: 'Lock all', icon: <MdLock size={14} color={light} /> }
]

const ClapperIcon = () => (
  <Icon w={15} h={14}>
    <path d="M0 5.500h14.500V14H0z" fill={light} />
    <path d="m.5 3.500 13.500-2.700" stroke={light} strokeWidth="2.600" strokeDasharray="2.400 1.200" />
    <path d="M3 5v2M6.500 5v2M10 5v2M13 5v2" stroke="#535353" />
  </Icon>
)

function LayersPanel() {
  return (
    <section className="mt-[1px] flex flex-1 flex-col border-y border-[#383838] text-[#e4e4e4]">
      <PanelTabs tabs={['Layers', 'Channels', 'Paths']} />
      <div className="flex h-8 items-center border-b border-[#3b3b3b] pt-[5px] pl-[3px]">
        <SelectBox
          label="Filter type"
          value="Kind"
          className="w-[88px] [&>select]:pl-1"
          icon={
            <Icon w={11} h={11} className="ml-[7px]">
              <circle cx="4.500" cy="4.500" r="3.700" stroke="#f0f0f0" strokeWidth="1.300" />
              <path d="m7 7 3.500 3.500" stroke="#f0f0f0" strokeWidth="2" />
            </Icon>
          }
        />
        <div className="ml-[5px] flex">
          {filters.map((filter) => (
            <button key={filter.name} type="button" aria-label={filter.name} className="flex w-6 items-center justify-center">
              {filter.icon}
            </button>
          ))}
        </div>
        <label className="mb-[3px] ml-[6px] flex h-[18px] w-[10px] rounded-full border border-[#6a6a6a] bg-[#454545]">
          <input type="checkbox" aria-label="Layer filtering" className="size-2 appearance-none rounded-full bg-[#dcdcdc]" />
        </label>
      </div>
      <div className="flex h-7 items-center border-b border-[#3b3b3b] pl-[3px]">
        <SelectBox label="Blend mode" value="Normal" className="w-[130px]" />
        <label htmlFor="Opacity" className="w-[46px] pl-[6px]">Opacity:</label>
        <PercentField id="Opacity" />
      </div>
      <div className="flex h-[30px] items-center pb-[2px] pl-[6px]">
        <span className="w-[28px]">Lock:</span>
        {locks.map((lock) => (
          <button key={lock.name} type="button" aria-label={lock.name} className="flex w-[22px] items-center justify-center">
            {lock.icon}
          </button>
        ))}
        <label htmlFor="Fill" className="w-[35px] pl-[17px]">Fill:</label>
        <PercentField id="Fill" />
      </div>
      <div className="flex flex-1 bg-[#4d4d4d]">
        <ul className="flex-1">
          <li className="flex h-[25px] items-center bg-[#535353]">
            <Eye name="Video Group 1" />
            <Chevron dir="down" className="ml-[2px] text-[#c8c8c8]" />
            <span className="ml-[3px]">
              <ClapperIcon />
            </span>
            <span className="ml-[11px]">Video Group 1</span>
          </li>
          <li className="flex h-[37px] items-center bg-[#6b6b6b] text-[#f0f0f0]">
            <Eye name="Layer 1" />
            <Icon w={36} h={32} className="ml-[17px]">
              <path d="M.5 10V.5H12M24 .5h11.500V10M35.500 22v9.500H24M12 31.500H.5V22" stroke="#fff" />
              <path d="M2.500 2.500h31v27h-31z" fill="#fff" stroke="#222" />
              <path d="M18 15h16v15H18z" fill="#5a5a5a" />
              <g transform="translate(21 17)">
                <FilmGlyph color="#f0f0f0" />
              </g>
            </Icon>
            <span className="ml-[7px]">Layer 1</span>
          </li>
        </ul>
        <div className="w-4 bg-[#4a4a4a]" />
      </div>
      <div className="flex h-[25px] items-center justify-end border-t border-[#3b3b3b] pr-5">
        <button type="button" aria-label="Link layers" className="flex w-[27px] justify-center">
          <Icon w={14} h={8}>
            <path d="M6 1H4a3 3 0 0 0 0 6h2M8 1h2a3 3 0 0 1 0 6H8M4.500 4h5" stroke="#8a8a8a" strokeWidth="1.300" />
          </Icon>
        </button>
        <button type="button" aria-label="Layer style" className="relative flex w-[27px] justify-center font-['Liberation_Serif',serif] text-[16px] leading-5 italic">
          fx
          <span className="absolute right-1 bottom-0 border-x-2 border-t-2 border-x-transparent border-t-white" />
        </button>
        <button type="button" aria-label="Add mask" className="flex w-[27px] justify-center">
          <Icon w={13} h={11}>
            <path d="M0 0h13v11H0z" fill={light} />
            <circle cx="6.500" cy="5.500" r="3.200" fill="#535353" />
          </Icon>
        </button>
        <button type="button" aria-label="New adjustment layer" className="relative flex w-[27px] justify-center">
          <HalfCircle />
          <span className="absolute right-1 -bottom-[2px] border-x-2 border-t-2 border-x-transparent border-t-white" />
        </button>
        <button type="button" aria-label="New group" className="flex w-[27px] justify-center">
          <Icon w={13} h={10}>
            <path d="M0 0h5l1 1.500h7V10H0z" fill={light} />
            <path d="M0 2.500h13" stroke="#777" strokeWidth=".6" />
          </Icon>
        </button>
        <button type="button" aria-label="New layer" className="flex w-[27px] justify-center">
          <Icon w={11} h={11}>
            <path d="M.5.5h10v10H.5zM5.500 3v5M3 5.500h5" stroke={light} />
          </Icon>
        </button>
        <button type="button" aria-label="Delete layer" className="flex w-[27px] justify-center">
          <Icon w={11} h={12}>
            <path d="M0 2.500h11M3.500 2V.5h4V2M1.500 2.500v9h8v-9M3.800 4.500v5.500M5.500 4.500v5.500M7.200 4.500v5.500" stroke={light} />
          </Icon>
        </button>
      </div>
    </section>
  )
}

function RightDock() {
  return (
    <aside className="flex shrink-0">
      <div className="w-[43px] border-x-[3px] border-[#404040] bg-[#535353]">
        <div className="flex h-3 items-center justify-end border-b border-[#383838] bg-[#424242] pr-[5px]">
          <DoubleChevron dir="left" />
        </div>
        <div className="flex h-[69px] flex-col items-center border-b border-[#3b3b3b] pt-1 pl-[1px]">
          <Grip />
          <button type="button" aria-label="History" className="mt-[6px]">
            <Icon w={15} h={17}>
              <path d="M.600.600h4v4h-4zM.600 6.600h4v4h-4z" stroke={light} strokeWidth="1.200" />
              <path d="M0 12h5v5H0z" fill={light} />
              <path d="M9 15.500c5-1.500 6.500-7 1.500-11" stroke={light} strokeWidth="1.800" />
              <path d="M8 1.500h6.500L8.500 8z" fill={light} />
            </Icon>
          </button>
          <button type="button" aria-label="Comments" className="mt-[11px]">
            <MdModeComment size={16} color={light} className="-scale-x-100" />
          </button>
        </div>
      </div>
      <div className="flex w-[285px] flex-col border-r border-[#404040] bg-[#535353]">
        <div className="flex h-3 items-center justify-end border-b border-[#383838] bg-[#424242] pr-[6px]">
          <DoubleChevron dir="right" />
        </div>
        <ColorPanel />
        <PropertiesPanel />
        <LayersPanel />
      </div>
    </aside>
  )
}

/* ---------- Windows taskbar ---------- */

function AppTile({ text, bg, fg }: { text: string; bg: string; fg: string }) {
  return <span className={`flex size-[22px] items-center justify-center rounded-[4px] text-[12px] font-semibold ${bg} ${fg}`}>{text}</span>
}

interface TaskbarApp {
  name: string
  icon: ReactNode
  open?: boolean
}

const taskbarApps: TaskbarApp[] = [
  {
    name: 'Cortana',
    icon: (
      <Icon w={16} h={16}>
        <circle cx="8" cy="8" r="6.500" stroke="#fff" strokeWidth="1.800" />
      </Icon>
    )
  },
  {
    name: 'Task View',
    icon: (
      <Icon w={17} h={16}>
        <path d="M1.500 4.500h9v6h-9zM1 0v2.500h10.500V0M1 16v-3.500h10.500V16M15 0v4M15 8.500V16" stroke="#fff" strokeWidth="1.100" />
        <path d="M14 4.500h2.500V8H14z" fill="#fff" />
      </Icon>
    )
  },
  {
    name: 'Microsoft Edge',
    icon: (
      <Icon w={24} h={24}>
        <defs>
          <linearGradient id="edge-a" x1="0" y1="0" x2="1" y2=".3">
            <stop offset="0" stopColor="#2ab4e8" />
            <stop offset="1" stopColor="#5fe05a" />
          </linearGradient>
          <linearGradient id="edge-b" x1="0" y1="0" x2="0" y2="1">
            <stop offset="0" stopColor="#1b9de2" />
            <stop offset="1" stopColor="#0c52a8" />
          </linearGradient>
        </defs>
        <path d="M12 0a12 12 0 1 0 9.500 19.300c.5-.7 0-1-.7-.7-3 1.400-7.800.9-9.800-2.600-1.500-2.800.5-5 2.700-4.500L24 10.500C24 5 19 0 12 0z" fill="url(#edge-b)" />
        <path d="M0 11C.5 4.500 5.500 0 12 0c7 0 12 5 12 10.500 0 4-3 6-6 6-2.500 0-4-1-3.200-2.300C16.500 11 14.500 7.500 10.500 6.500 6 5.500 1.500 7.500 0 11z" fill="url(#edge-a)" />
        <path d="M9.500 11c-2.500 4 .5 10.500 7 10.500 2 0 4-.8 5-2.200-3 1-9.500 1.200-11.500-4.300-.4-1.400-.5-2.700-.5-4z" fill="#0f4f9c" opacity=".8" />
      </Icon>
    )
  },
  {
    name: 'Outlook',
    open: true,
    icon: (
      <Icon w={24} h={22}>
        <path d="M7 0h15v12H7z" fill="#28a8ea" />
        <path d="M14 0h8v6h-8z" fill="#50d9ff" />
        <path d="M7 6h7v6H7z" fill="#0364b8" />
        <path d="M6 10h18v12H6z" fill="#1490df" />
        <path d="M24 10 13 18l11 4z" fill="#0f6cbd" />
        <rect y="5" width="14" height="13" rx="1" fill="#0a5fb5" />
        <text x="7" y="15.500" fontSize="11" fontWeight="700" fill="#fff" textAnchor="middle">O</text>
      </Icon>
    )
  },
  {
    name: 'File Explorer',
    open: true,
    icon: (
      <Icon w={22} h={20}>
        <path d="M0 0h8l2 2h11v17H0z" fill="#e0a82e" />
        <path d="M0 4h22v15H0z" fill="#ffd667" />
        <path d="M4 10h14v9h-4v-4H8v4H4z" fill="#3f8fd2" />
      </Icon>
    )
  },
  {
    name: 'Excel',
    icon: (
      <Icon w={24} h={22}>
        <path d="M6 0h18v22H6z" fill="#21a366" />
        <path d="M15 0h9v6h-9z" fill="#33c481" />
        <path d="M6 11h18v11H6z" fill="#107c41" />
        <path d="M6 16.500h18V22H6z" fill="#185c37" />
        <rect y="4" width="14" height="14" rx="1" fill="#107c41" />
        <text x="7" y="15" fontSize="11" fontWeight="700" fill="#fff" textAnchor="middle">X</text>
      </Icon>
    )
  },
  { name: 'Illustrator', icon: <AppTile text="Ai" bg="bg-[#330000]" fg="text-[#ff9a00]" /> },
  {
    name: 'Office',
    icon: (
      <Icon w={18} h={22}>
        <path d="M0 4.500 10.500 0v4L5 6v10l5.500 2v4L0 17.500z" fill="#c4314b" />
        <path d="M9.500 0 18 2.500v17L9.500 22z" fill="#f25022" />
        <path d="M3 17.500h7.500V22z" fill="#a1182a" />
      </Icon>
    )
  },
  {
    name: 'Chrome',
    open: true,
    icon: (
      <Icon w={24} h={24}>
        <circle cx="12" cy="12" r="11.500" fill="#fbc116" />
        <path d="M12 12H23.500A11.500 11.500 0 0 0 2 6.300l5 8.700z" fill="#e04a3f" />
        <path d="M2 6.300A11.500 11.500 0 0 0 11.500 23.500L17 14.800 12 12 7 14.800z" fill="#2da94f" />
        <path d="M12 6.800h10.300a11.500 11.500 0 0 1-10.800 16.700L16.500 14.600z" fill="#fbc116" />
        <circle cx="12" cy="12" r="5.200" fill="#fff" />
        <circle cx="12" cy="12" r="4.200" fill="#4285f4" />
      </Icon>
    )
  },
  {
    name: 'Teams',
    open: true,
    icon: (
      <Icon w={26} h={28}>
        <circle cx="14" cy="4" r="3.500" fill="#7b83eb" />
        <circle cx="21" cy="5" r="2.500" fill="#5059c9" />
        <path d="M16 9h8v8c0 2.500-1.500 4-4 4h-4z" fill="#5059c9" />
        <path d="M7 9h10.500v10a6 6 0 0 1-10.500 4z" fill="#7b83eb" />
        <rect x="1" y="6.500" width="13" height="13" rx="1" fill="#4b53bc" />
        <text x="7.500" y="17" fontSize="11" fontWeight="700" fill="#fff" textAnchor="middle">T</text>
        <circle cx="19.200" cy="21" r="6.800" fill="#c4203e" />
        <text x="19.200" y="25" fontSize="11" fill="#fff" textAnchor="middle">1</text>
      </Icon>
    )
  },
  {
    name: 'Creative Cloud',
    open: true,
    icon: (
      <span className="flex size-[22px] items-center justify-center rounded-[5px] bg-[conic-gradient(#f5b700,#a6d608,#2bb5d8,#8a3ffc,#e0218a,#f0322c,#f5b700)]">
        <Icon w={16} h={13}>
          <path d="M5 12a4.200 4.200 0 0 1-.8-8.300A5.500 5.500 0 0 1 15.200 6.500 5.400 5.400 0 0 1 9.800 12z" fill="#fff" />
          <path d="M8 10.300 5.800 8.200c-1.500-1.200-2.800.7-1.500 1.700M6.500 5.700 10 9c2.800 1.500 4.600-2.300 2.300-4-1.200-.9-2.700-.5-3.500.5" stroke="#e04a5c" strokeWidth="1.200" />
        </Icon>
      </span>
    )
  },
  { name: 'Adobe XD', open: true, icon: <AppTile text="Xd" bg="bg-[#470137]" fg="text-[#ff61f6]" /> },
  {
    name: 'Skype',
    open: true,
    icon: (
      <Icon w={23} h={24}>
        <circle cx="7" cy="7" r="6.500" fill="#0b9fe8" />
        <circle cx="16" cy="17" r="6.500" fill="#0b86dc" />
        <circle cx="11.500" cy="12" r="10" fill="#10a5ec" />
        <text x="11.500" y="18" fontSize="16" fontWeight="700" fill="#fff" textAnchor="middle">S</text>
      </Icon>
    )
  },
  { name: 'Photoshop', open: true, icon: <AppTile text="Ps" bg="bg-[#001e36]" fg="text-[#31a8ff]" /> }
]

function Taskbar() {
  return (
    <footer className="flex h-10 shrink-0 items-stretch bg-[#0b1d2c] text-white">
      <button type="button" aria-label="Start" className="flex w-12 items-center justify-center">
        <Icon w={16} h={16}>
          <path d="M0 2.300 6.800 1.300v6.200H0zM7.800 1.200 16 0v7.500H7.800zM0 8.500h6.800v6.200L0 13.700zM7.800 8.500H16V16l-8.200-1.200z" fill="#fff" />
        </Icon>
      </button>
      <label className="flex w-[344px] items-center gap-[11px] border border-[#b8bec4] bg-[#f3f4f6] pl-[11px]">
        <Icon w={17} h={17}>
          <circle cx="10.500" cy="6.500" r="5.500" stroke="#222" strokeWidth="1.200" />
          <path d="M6.500 10.500.5 16.500" stroke="#222" strokeWidth="1.300" />
        </Icon>
        <input
          type="search"
          aria-label="Search"
          placeholder="Type here to search"
          className="min-w-0 flex-1 bg-transparent text-[14px] text-[#333] outline-none placeholder:text-[#3c3c3c]"
        />
      </label>
      <div className="flex">
        {taskbarApps.map((app) => (
          <button
            key={app.name}
            type="button"
            aria-label={app.name}
            className={`flex w-[49px] flex-col items-center ${app.name === 'Photoshop' ? 'bg-[#07416f]' : ''}`}
          >
            <span className="flex flex-1 items-center">{app.icon}</span>
            <span
              className={`h-[2px] ${app.name === 'Photoshop' ? 'w-full' : 'w-10'} ${app.open ? 'bg-[#9ccbf3]' : ''}`}
            />
          </button>
        ))}
      </div>
      <div className="ml-auto flex items-center">
        <button type="button" className="flex items-center gap-[9px] text-[13px] whitespace-nowrap">
          <Icon w={22} h={20}>
            <circle cx="11" cy="10" r="10" fill="#fbb62f" />
            <path d="M2 14.500c2-2.500 5-3 7-1.500 2-2.500 7-2 8 0 2-.5 4 .5 4.500 1.800-5 1.700-15 1.500-19.500-.3z" fill="#fbe6c2" />
            <path d="M4 16.500c5 1.200 10 1.200 14.500 0" stroke="#e08a1e" strokeWidth="1.500" />
          </Icon>
          <span className="w-[69px]">26°C&nbsp; Haze</span>
        </button>
        <button type="button" aria-label="Show hidden icons" className="ml-[15px]">
          <Icon w={14} h={8}>
            <path d="m1 7 6-6 6 6" stroke="#fff" strokeWidth="1.300" />
          </Icon>
        </button>
        <Icon w={13} h={16} className="ml-3">
          <path d="M1.500 5h7v6.500h-5a2 2 0 0 1-2-2zM8.500 7l3-1.500v5.500l-3-1.500" stroke="#fff" strokeWidth="1.200" />
          <path d="M2 2.500C4 .3 7 .3 9 2.500M2 14c2 1.800 5 1.800 7 0" stroke="#fff" />
        </Icon>
        <Icon w={17} h={16} className="ml-[9px]">
          <path d="m4.500 0 4 2.500-4 2.500-4-2.500zM12.500 0l4 2.500-4 2.500-4-2.500zM12.500 5l4 2.500-4 2.500-4-2.500z" fill="#fff" />
          <rect y="6" width="9" height="10" rx="1" fill="#d0112b" />
          <text x="4.500" y="14" fontSize="8" fill="#fff" textAnchor="middle">1</text>
        </Icon>
        <Icon w={17} h={14} className="ml-[7px]">
          <path d="M5.500 1.500h11v8.500h-13V5.500M10 10v3M6 13h8M.5.5h4v4h-4z" stroke="#fff" strokeWidth="1.200" />
        </Icon>
        <Icon w={17} h={12} className="ml-2">
          <path d="M5.500 2.500h9v7.500h-9" stroke="#fff" strokeWidth="1.200" />
          <path d="M7 4h6.500v4.500H7zM15 4.500h1.500v3.500H15zM0 2h5v3c0 1-1 2-2.500 2S0 6 0 5zM1 0h1v2H1zM3.200 0h1v2h-1zM2 7h1v4H2zM3 10h3v1H3z" fill="#fff" />
        </Icon>
        <Icon w={17} h={14} className="ml-[7px]">
          <path d="M.5 4.500h3L7 1.500v11L3.500 9.500h-3zM9.500 5c1 1 1 3 0 4M11.800 3c2 2 2 6 0 8M14 1c3 3 3 9 0 12" stroke="#fff" strokeWidth="1.100" />
        </Icon>
        <Icon w={17} h={17} className="ml-[11px]">
          <path d="m6 12.500 6-10.500c1-1.500 3-.5 2.300 1L8.500 13.500 5.800 15zM1 13c0-4 6-5 5-1.500C5.500 13.500 3 17 1.500 15.500M10 11c2-3 5-3 5-1s-3 3-4 1.500" stroke="#fff" strokeWidth="1.200" />
        </Icon>
        <span className="ml-[13px] w-[26px] text-[12px]">ENG</span>
        <time className="ml-[7px] w-[64px] text-center text-[12px] leading-[18px] whitespace-nowrap">
          03:22 PM
          <br />
          22-02-2022
        </time>
        <button type="button" aria-label="Notifications" className="relative ml-[14px] h-6 w-[25px]">
          <Icon w={16} h={16}>
            <path d="M0 0h16v12H9l-3.500 3.500V12H0z" fill="#fff" />
            <path d="M3 3.500h10M3 6h10M3 8.500h7" stroke="#0b1d2c" />
          </Icon>
          <span className="absolute right-0 bottom-0 flex size-[17px] items-center justify-center rounded-full border border-[#7fa6c4] bg-[#0c4a7a] text-[10px] font-semibold">13</span>
        </button>
        <span className="ml-[12px] h-10 w-[5px] border-l border-[#5c6b77]" />
      </div>
    </footer>
  )
}

export default function App() {
  return (
    <div className="flex min-h-screen flex-col bg-[#535353] font-['Open_Sans','Noto_Sans',sans-serif]">
      <MenuBar />
      <div className="flex flex-1 flex-col font-['DejaVu_Sans_Condensed','DejaVu_Sans',sans-serif] text-[10px] leading-3">
        <OptionsBar />
        <main className="flex flex-1">
          <Toolbar />
          <div className="flex min-w-0 flex-1 flex-col">
            <DocumentArea />
            <Timeline />
          </div>
          <RightDock />
        </main>
      </div>
      <Taskbar />
    </div>
  )
}
